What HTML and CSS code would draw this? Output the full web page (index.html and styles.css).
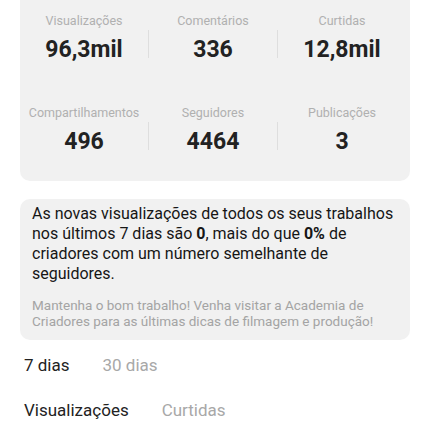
FILE: index.html
```html
<!DOCTYPE html>
<html lang="pt">
<head>
  <meta charset="UTF-8" />
  <meta name="viewport" content="width=device-width, initial-scale=1.0"/>
  <title>Análises</title>
  <link rel="stylesheet" href="styles.css">
</head>
<body>

  <div class="card stats">
    <div class="stat-row">
      <div class="stat">
        <div class="stat-label">Visualizações</div>
        <div class="stat-value">96,3mil</div>
      </div>
      <div class="divider"></div>
      <div class="stat">
        <div class="stat-label">Comentários</div>
        <div class="stat-value">336</div>
      </div>
      <div class="divider"></div>
      <div class="stat">
        <div class="stat-label">Curtidas</div>
        <div class="stat-value">12,8mil</div>
      </div>
    </div>
    <div class="stat-row">
      <div class="stat">
        <div class="stat-label">Compartilhamentos</div>
        <div class="stat-value">496</div>
      </div>
      <div class="divider"></div>
      <div class="stat">
        <div class="stat-label">Seguidores</div>
        <div class="stat-value">4464</div>
      </div>
      <div class="divider"></div>
      <div class="stat">
        <div class="stat-label">Publicações</div>
        <div class="stat-value">3</div>
      </div>
    </div>
  </div>

  <div class="card summary">
    <p class="summary-main">As novas visualizações de todos os seus trabalhos nos últimos 7 dias são <b>0</b>, mais do que <b>0%</b> de criadores com um número semelhante de seguidores.</p>
    <p class="summary-tip">Mantenha o bom trabalho! Venha visitar a Academia de Criadores para as últimas dicas de filmagem e produção!</p>
  </div>

  <div class="tabs period">
    <span class="tab active">7 dias</span>
    <span class="tab">30 dias</span>
  </div>

  <div class="tabs metric">
    <span class="tab active">Visualizações</span>
    <span class="tab">Curtidas</span>
  </div>

</body>
</html>
```

FILE: styles.css
```css
body {
  margin: 0;
  font-family: Roboto, 'Noto Sans', sans-serif;
  background: #fff;
  color: #222;
}

.card {
  background: #f1f1f1;
  margin: 0 20px;
  border-radius: 10px;
}

.stats {
  border-radius: 0 0 10px 10px;
  padding: 14px 4px 26px 0;
}

.stat-row {
  display: grid;
  grid-template-columns: 1fr 1px 1fr 1px 1fr;
}

.stat-row + .stat-row {
  margin-top: 43px;
}

.stat {
  text-align: center;
}

.stat-label {
  font-size: 12.5px;
  line-height: 14px;
  color: #b0b0b0;
}

.stat-value {
  margin-top: 9px;
  font-size: 23px;
  line-height: 26px;
  font-weight: 700;
  color: #222;
}

.divider {
  align-self: end;
  height: 28px;
  margin-bottom: 5px;
  background: #dedede;
}

.summary {
  margin-top: 18px;
  padding: 5px 12px 11px;
}

.summary p {
  margin: 0;
}

.summary-main {
  font-size: 16px;
  line-height: 20px;
  font-weight: 400;
  color: #161616;
}

.summary-main b {
  font-weight: 700;
}

.summary-tip {
  margin-top: 14px !important;
  font-size: 13.5px;
  line-height: 15.5px;
  color: #a4a4a4;
}

.tabs {
  display: flex;
  gap: 33px;
  padding: 0 24px;
  font-size: 17px;
  line-height: 20px;
}

.period {
  margin-top: 15px;
}

.metric {
  margin-top: 25px;
}

.tab {
  color: #a8a8a8;
}

.tab.active {
  color: #222;
}
```
